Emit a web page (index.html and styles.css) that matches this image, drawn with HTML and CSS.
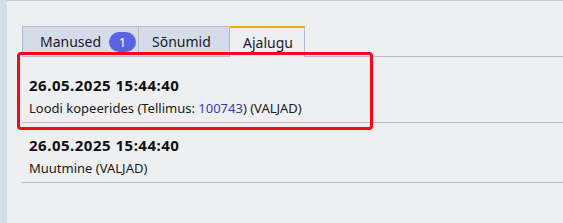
FILE: index.html
```html
<!DOCTYPE html>
<html lang="et">
<head>
<meta charset="utf-8">
<link rel="stylesheet" href="styles.css">
</head>
<body>
<div class="sidebar"></div>
<main class="main">
  <nav class="tabs">
    <div class="tab tab-manused">Manused <span class="badge">1</span></div>
    <div class="tab tab-sonumid">Sõnumid</div>
    <div class="tab tab-active">Ajalugu</div>
    <div class="tabs-rest"></div>
  </nav>
  <div class="list">
    <div class="highlight"></div>
    <div class="item">
      <div class="date">26.05.2025 15:44:40</div>
      <div class="desc">Loodi kopeerides (Tellimus: <a class="link">100743</a>) (VALJAD)</div>
    </div>
    <div class="item">
      <div class="date">26.05.2025 15:44:40</div>
      <div class="desc">Muutmine (VALJAD)</div>
    </div>
  </div>
</main>
</body>
</html>
```
FILE: styles.css
```css
html, body {
  margin: 0;
  height: 100%;
}
body {
  display: flex;
  background: #eeeff1;
  font-family: "Noto Sans", "Open Sans", sans-serif;
  color: #111;
  overflow: hidden;
}
.sidebar {
  width: 7px;
  background: #d5dbe9;
  flex: none;
}
.main {
  flex: 1;
  border-top: 1px solid #c3c8d3;
  padding-top: 25px;
}
.tabs {
  display: flex;
  padding-left: 15px;
  height: 31px;
}
.tab {
  box-sizing: border-box;
  height: 31px;
  border: 1px solid #b5bdcc;
  border-bottom: 1px solid #b5bdcc;
  background: #d5dbe8;
  font-size: 14px;
  line-height: 28px;
  color: #1a1a2a;
  display: flex;
  align-items: center;
  padding-top: 1px;
}
.tab + .tab {
  border-left: none;
}
.tab-manused {
  width: 117px;
  padding-left: 17px;
}
.tab-sonumid {
  width: 91px;
  padding-left: 13px;
}
.tab-active {
  width: 75px;
  padding-left: 13px;
  background: #eeeff1;
  border-top: 2px solid #f0aa1e;
  border-bottom: none;
}
.tabs-rest {
  flex: 1;
  border-bottom: 1px solid #b5bdcc;
}
.badge {
  display: inline-flex;
  align-items: center;
  justify-content: center;
  width: 27px;
  height: 20px;
  border-radius: 10px;
  background: #5c63e2;
  color: #fff;
  font-size: 13px;
  margin-left: 8px;
  margin-top: -1px;
}
.list {
  position: relative;
  padding-top: 6px;
  padding-left: 15px;
}
.highlight {
  position: absolute;
  left: 10px;
  top: -5px;
  width: 350px;
  height: 72px;
  border: 3px solid #ee0a1c;
  border-radius: 4px;
  pointer-events: none;
}
.item {
  padding: 11px 0 4px 7px;
  border-bottom: 1px solid #b5bdcc;
}
.date {
  font-size: 15px;
  font-weight: 700;
  letter-spacing: 0.5px;
  line-height: 22px;
  color: #111;
}
.desc {
  font-size: 13px;
  line-height: 20px;
  margin-top: 2px;
  color: #1a1a1a;
}
.link {
  color: #3b3bb2;
}
```
